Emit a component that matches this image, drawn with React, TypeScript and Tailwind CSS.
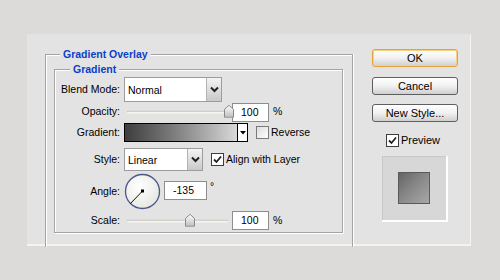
import React from "react";

const font = { fontFamily: '"Liberation Sans", Arial, sans-serif' };

function Chevron() {
  return (
    <svg width="9" height="7" viewBox="0 0 9 7">
      <path d="M1 1.5 L4.5 5 L8 1.5" fill="none" stroke="#222" strokeWidth="2" />
    </svg>
  );
}

function Select({ value, width }: { value: string; width: string }) {
  return (
    <div className={`flex h-full ${width} border border-[#9c9c9c] bg-white`}>
      <div className="flex flex-1 items-center pl-[3px] pt-[2px] text-[10.5px] text-black">{value}</div>
      <div className="flex w-[15px] items-center justify-center border-l border-[#b4b4b4] bg-gradient-to-b from-[#f4f4f4] to-[#c9c9c9]">
        <Chevron />
      </div>
    </div>
  );
}

function Thumb() {
  return (
    <svg width="10" height="13" viewBox="0 0 10 13">
      <defs>
        <linearGradient id="th" x1="0" y1="0" x2="0" y2="1">
          <stop offset="0" stopColor="#ffffff" />
          <stop offset="1" stopColor="#bdbdbd" />
        </linearGradient>
      </defs>
      <path d="M0.5 4.5 L5 0.5 L9.5 4.5 V12.5 H0.5 Z" fill="url(#th)" stroke="#8a8a8a" />
    </svg>
  );
}

function Slider({ pos }: { pos: number }) {
  return (
    <div className="relative ml-[6px] h-full w-[101px]">
      <div className="absolute left-0 right-0 top-1/2 h-[3px] -translate-y-1/2 rounded-full border-t border-[#a8a8a8] bg-[#f6f6ee]" />
      <div className="absolute top-1/2 -translate-y-[55%]" style={{ left: pos }}>
        <Thumb />
      </div>
    </div>
  );
}

function NumBox({ value, width = "w-[37px]" }: { value: string; width?: string }) {
  return (
    <div className={`flex h-[19px] ${width} items-center border border-[#8e8e8e] bg-white pl-[8px] pt-[1px] text-[10.5px]`}>
      {value}
    </div>
  );
}

function Check({ checked }: { checked: boolean }) {
  return (
    <div
      className={`flex h-[13px] w-[13px] items-center justify-center border ${
        checked ? "border-[#3c3c3c] bg-white" : "border-[#7a7a7a] bg-gradient-to-br from-[#dcdcdc] to-white"
      }`}
    >
      {checked && (
        <svg width="9" height="9" viewBox="0 0 9 9">
          <path d="M1 4.5 L3.5 7 L8 1.5" fill="none" stroke="#222" strokeWidth="1.8" />
        </svg>
      )}
    </div>
  );
}

function Label({ children }: { children: React.ReactNode }) {
  return <div className="w-[66px] pr-[1px] text-right text-[10.5px] text-black">{children}</div>;
}

function AngleDial() {
  return (
    <svg width="37" height="37" viewBox="0 0 37 37">
      <defs>
        <radialGradient id="dial" cx="0.4" cy="0.35" r="0.7">
          <stop offset="0" stopColor="#ffffff" />
          <stop offset="1" stopColor="#e6e6e0" />
        </radialGradient>
      </defs>
      <circle cx="18.5" cy="18.5" r="17" fill="url(#dial)" stroke="#4c5689" strokeWidth="1.3" />
      <line x1="18.5" y1="18" x2="6.5" y2="30.5" stroke="#111" strokeWidth="1" />
      <rect x="17" y="16.5" width="3" height="3" fill="#000" />
    </svg>
  );
}

function Button({ children, focused }: { children: React.ReactNode; focused?: boolean }) {
  return (
    <div
      className={`flex h-[18px] w-[86px] items-center justify-center rounded-[3px] border bg-gradient-to-b from-white via-[#f1f1f1] to-[#cfcfcf] text-[11px] text-black ${
        focused ? "border-[#e8a23a] shadow-[inset_0_0_0_1px_#f8cf7c]" : "border-[#5f5f5f]"
      }`}
    >
      {children}
    </div>
  );
}

export default function App() {
  return (
    <div className="h-[280px] w-[500px] bg-[#dcdbd9] pl-[27px] pt-[34px]" style={font}>
      <div className="flex h-[212px] w-[444px] border-b-2 border-r border-[#f3f3f3] bg-[#e3e3e3] pl-[18px] pt-[15px]">
        {/* Gradient Overlay group */}
        <div className="relative mt-[5px] h-[193px] w-[308px] border-l border-r border-t border-[#a3a3a3] shadow-[inset_1px_1px_0_#fff,1px_0_0_#fff]">
          <div className="absolute -top-[8px] left-[14px] bg-[#e3e3e3] px-[3px] text-[10.5px] font-bold text-[#0b3fc6]">
            Gradient Overlay
          </div>

          {/* Gradient group */}
          <div className="relative ml-[8px] mt-[14px] h-[164px] w-[289px] border border-[#a3a3a3] shadow-[inset_1px_1px_0_#fff,1px_1px_0_#fff]">
            <div className="absolute -top-[8px] left-[15px] bg-[#e3e3e3] px-[3px] text-[10.5px] font-bold text-[#0b3fc6]">
              Gradient
            </div>

            <div className="flex flex-col pt-[7px]">
              <div className="flex h-[25px] items-center">
                <Label>Blend Mode:</Label>
                <div className="ml-[3px] h-full">
                  <Select value="Normal" width="w-[98px]" />
                </div>
              </div>

              <div className="flex h-[20px] items-center">
                <Label>Opacity:</Label>
                <Slider pos={97} />
                <div className="ml-[4px]">
                  <NumBox value="100" />
                </div>
                <div className="ml-[4px] text-[10.5px]">%</div>
              </div>

              <div className="mt-[1px] flex h-[19px] items-center">
                <Label>Gradient:</Label>
                <div className="ml-[3px] flex h-full w-[124px] border border-black bg-white">
                  <div className="flex-1 bg-gradient-to-r from-[#3e3e3e] to-[#d9d9d9]" />
                  <div className="flex w-[10px] items-center justify-center border-l border-black">
                    <svg width="6" height="4" viewBox="0 0 6 4">
                      <path d="M0 0 H6 L3 3.5 Z" fill="#000" />
                    </svg>
                  </div>
                </div>
                <div className="ml-[8px]">
                  <Check checked={false} />
                </div>
                <div className="ml-[2px] text-[10.5px]">Reverse</div>
              </div>

              <div className="mt-[6px] flex h-[23px] items-center">
                <Label>Style:</Label>
                <div className="ml-[3px] h-full">
                  <Select value="Linear" width="w-[79px]" />
                </div>
                <div className="ml-[8px]">
                  <Check checked={true} />
                </div>
                <div className="ml-[2px] text-[10.5px]">Align with Layer</div>
              </div>

              <div className="mt-[2px] flex h-[37px] items-center">
                <Label>Angle:</Label>
                <div className="ml-[3px] flex items-center">
                  <AngleDial />
                </div>
                <div className="ml-[3px] mt-[-2px]">
                  <NumBox value="-135" width="w-[43px]" />
                </div>
                <div className="ml-[3px] mt-[-10px] text-[10.5px]">°</div>
              </div>

              <div className="mt-[1px] flex h-[19px] items-center">
                <Label>Scale:</Label>
                <Slider pos={58} />
                <div className="ml-[4px]">
                  <NumBox value="100" />
                </div>
                <div className="ml-[4px] text-[10.5px]">%</div>
              </div>
            </div>
          </div>
        </div>

        {/* Right column */}
        <div className="ml-[19px] flex flex-col items-center">
          <Button focused>OK</Button>
          <div className="mt-[10px]">
            <Button>Cancel</Button>
          </div>
          <div className="mt-[9px]">
            <Button>New Style...</Button>
          </div>
          <div className="mt-[10px] flex items-center pr-[4px]">
            <Check checked={true} />
            <div className="ml-[2px] text-[11px]">Preview</div>
          </div>
          <div className="mt-[7px] flex h-[66px] w-[66px] items-center justify-center border-b-2 border-r-2 border-white bg-[#d7d7d7] shadow-[inset_1px_1px_0_#c8c8c8]">
            <div className="h-[32px] w-[32px] border border-[#5a5a5a] bg-gradient-to-br from-[#656565] via-[#8a8a8a] to-[#a7a7a7]" />
          </div>
        </div>
      </div>
    </div>
  );
}
